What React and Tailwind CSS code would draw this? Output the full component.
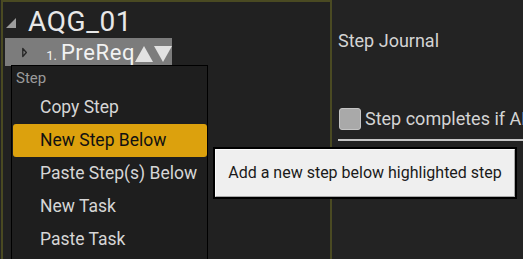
import React from 'react';

const font = { fontFamily: 'Roboto, "Noto Sans", sans-serif' };

const menuItems = ["Copy Step", "New Step Below", "Paste Step(s) Below", "New Task", "Paste Task"];

const StepMenu = () => (
  <div className="absolute left-[11px] top-[65px] w-[197px] h-[200px] bg-[#1e1e1e] border border-black">
    <div className="h-[25px] pl-[4px] pt-[3px] text-[15px] leading-[18px] text-[#9a9a9a]">Step</div>
    {menuItems.map((item) => {
      const active = item === "New Step Below";
      return (
        <div
          key={item}
          className={`ml-[1px] h-[33px] pl-[27px] flex items-center text-[17.5px] whitespace-nowrap rounded-[3px] ${
            active ? "bg-[#dca10d] text-[#111]" : "text-[#d6d6d6]"
          }`}
        >
          {item}
        </div>
      );
    })}
  </div>
);

const Tooltip = () => (
  <div className="absolute left-[213px] top-[147px] w-[304px] h-[52px] border-2 border-black">
    <div className="w-full h-full bg-[#efefef] border border-t-[#fbfbfb] border-l-[#fbfbfb] border-b-[#a8a8a8] border-r-[#a8a8a8] flex items-center justify-center text-[16px] text-[#1a1a1a] whitespace-nowrap">
      Add a new step below highlighted step
    </div>
  </div>
);

export default function App() {
  return (
    <div className="relative w-[523px] h-[259px] overflow-hidden bg-[#232323] flex" style={font}>
      {/* quest tree panel */}
      <div className="ml-px w-[331px] h-full border-l-2 border-t-2 border-r-2 border-[#4a4a22] bg-[#212121] shrink-0">
        <div className="flex items-center pt-[5px] h-[35px]">
          <svg width="10" height="10" viewBox="0 0 10 10" className="ml-[3px] mt-[2px]">
            <polygon points="10,0 10,10 0,10" fill="#9c9c9c" />
          </svg>
          <span className="ml-[12px] text-[28px] leading-[30px] tracking-[0.6px] text-[#e8e8e8]">AQG_01</span>
        </div>
        <div className="ml-[2px] mt-[1px] w-[167px] h-[28px] bg-[#7c7c7c] flex items-center">
          <svg width="8" height="15" viewBox="0 0 8 15" className="ml-[17px]">
            <polygon points="1.2,1.2 6.8,7.5 1.2,13.8" fill="none" stroke="#262626" strokeWidth="2" strokeLinejoin="round" />
          </svg>
          <div className="ml-[19px] flex items-baseline text-[#f2f2f2] mt-[2px]">
            <span className="text-[13px]">1.</span>
            <span className="ml-[4px] text-[22px] leading-[24px] tracking-[0.6px]">PreReq</span>
          </div>
          <div className="ml-auto flex items-center gap-px mt-[3px]">
            <svg width="18" height="16" viewBox="0 0 18 16">
              <polygon points="9,0 18,16 0,16" fill="#e2e2e2" />
            </svg>
            <svg width="18" height="16" viewBox="0 0 18 16">
              <polygon points="0,0 18,0 9,16" fill="#e2e2e2" />
            </svg>
          </div>
        </div>
      </div>

      {/* step details panel */}
      <div className="flex-1 pl-[6px] text-[#d4d4d4]">
        <div className="mt-[31px] text-[18px] leading-[20px]">Step Journal</div>
        <div className="mt-[54px] flex items-center whitespace-nowrap">
          <div className="ml-px w-[22px] h-[22px] rounded-[3px] bg-[#a9a9a9] border border-[#c4c4c4] shrink-0" />
          <span className="ml-[4px] text-[18px]">Step completes if ANY task is complete</span>
        </div>
        <div className="mt-[7px] h-[2px] bg-[#c6c6c6]" />
      </div>

      <StepMenu />
      <Tooltip />
    </div>
  );
}
